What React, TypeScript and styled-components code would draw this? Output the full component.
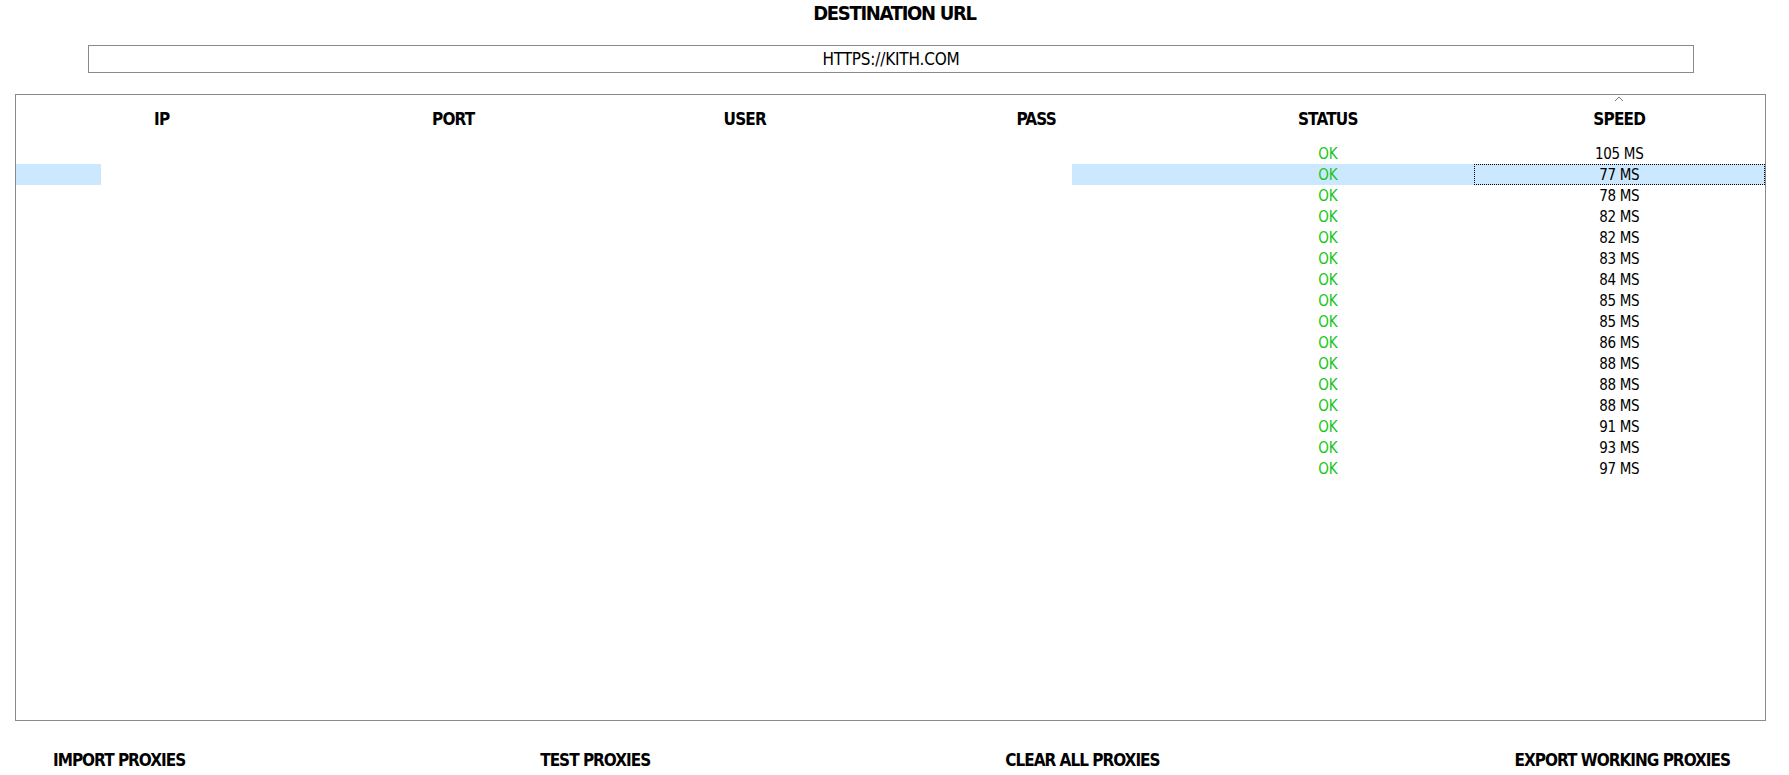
import styled, { createGlobalStyle } from "styled-components";

const GlobalStyle = createGlobalStyle`
  html, body {
    margin: 0;
    padding: 0;
    background: #ffffff;
  }
  body {
    font-family: "Liberation Sans Narrow", "DejaVu Sans Condensed", "Liberation Sans", sans-serif;
    color: #000000;
  }
`;

const speeds = [105, 77, 78, 82, 82, 83, 84, 85, 85, 86, 88, 88, 88, 91, 93, 97];
const columns = ["IP", "PORT", "USER", "PASS", "STATUS", "SPEED"];
const buttons = ["IMPORT PROXIES", "TEST PROXIES", "CLEAR ALL PROXIES", "EXPORT WORKING PROXIES"];

const Page = styled.div`
  width: 100%;
  display: flex;
  flex-direction: column;
`;

const Title = styled.div`
  height: 26px;
  line-height: 26px;
  margin-bottom: 2px;
  text-align: center;
  font-size: 20px;
  font-weight: 700;
  letter-spacing: -1.3px;
`;

const UrlWrap = styled.div`
  margin-top: 17px;
  padding: 0 95px 0 88px;
`;

const UrlInput = styled.div`
  height: 26px;
  border: 1px solid #8a8a8a;
  display: flex;
  align-items: center;
  justify-content: center;
  font-size: 17px;
  letter-spacing: -0.2px;
`;

const Table = styled.div`
  margin: 21px 23px 0 15px;
  height: 625px;
  border: 1px solid #8a8a8a;
  display: flex;
  flex-direction: column;
`;

const Grid = styled.div`
  display: grid;
  grid-template-columns: repeat(6, 1fr);
`;

const HeaderRow = styled(Grid)`
  height: 48px;
`;

const HeaderCell = styled.div`
  position: relative;
  display: flex;
  align-items: center;
  justify-content: center;
  font-size: 17px;
  font-weight: 700;
  letter-spacing: -0.8px;
`;

const SortCaret = styled.svg`
  position: absolute;
  top: 0;
  left: 50%;
  margin-left: -5px;
`;

const Row = styled(Grid)<{ $selected?: boolean }>`
  height: 21px;
  background: ${(p) =>
    p.$selected
      ? "linear-gradient(to right, #cce8ff 0 85px, transparent 85px 1056px, #cce8ff 1056px)"
      : "transparent"};
`;

const Cell = styled.div<{ $ok?: boolean; $focus?: boolean }>`
  display: flex;
  align-items: center;
  justify-content: center;
  font-size: 15px;
  letter-spacing: -0.3px;
  color: ${(p) => (p.$ok ? "#16c516" : "#000000")};
  border: 1px dotted ${(p) => (p.$focus ? "#000000" : "transparent")};
`;

const Actions = styled.div`
  margin-top: 27px;
  padding: 0 59px 0 53px;
  display: flex;
  justify-content: space-between;
`;

const ActionButton = styled.button`
  background: none;
  border: none;
  padding: 0;
  height: 24px;
  font-family: inherit;
  font-size: 17px;
  font-weight: 700;
  letter-spacing: -1px;
  color: #000000;
  cursor: pointer;
`;

export default function App() {
  return (
    <>
      <GlobalStyle />
      <Page>
        <Title>DESTINATION URL</Title>
        <UrlWrap>
          <UrlInput>HTTPS://KITH.COM</UrlInput>
        </UrlWrap>
        <Table>
          <HeaderRow>
            {columns.map((c) => (
              <HeaderCell key={c}>
                {c === "SPEED" && (
                  <SortCaret width="10" height="7" viewBox="0 0 10 7">
                    <path d="M1 6 L5 2 L9 6" fill="none" stroke="#7a7a7a" strokeWidth="1" />
                  </SortCaret>
                )}
                {c}
              </HeaderCell>
            ))}
          </HeaderRow>
          {speeds.map((s, i) => (
            <Row key={i} $selected={i === 1}>
              <Cell />
              <Cell />
              <Cell />
              <Cell />
              <Cell $ok>OK</Cell>
              <Cell $focus={i === 1}>{s} MS</Cell>
            </Row>
          ))}
        </Table>
        <Actions>
          {buttons.map((b) => (
            <ActionButton key={b}>{b}</ActionButton>
          ))}
        </Actions>
      </Page>
    </>
  );
}
